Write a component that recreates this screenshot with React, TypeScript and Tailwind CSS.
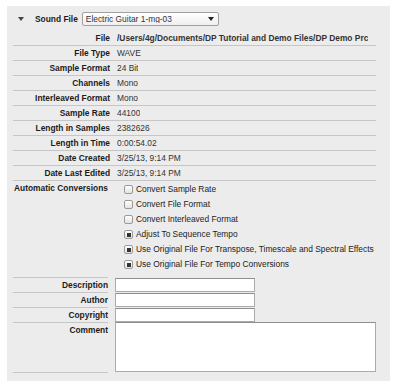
const font = { fontFamily: '"Liberation Sans", Arial, sans-serif' };

const infoRows: { label: string; value: string; bold?: boolean }[] = [
  { label: "File", value: "/Users/4g/Documents/DP Tutorial and Demo Files/DP Demo Prc", bold: true },
  { label: "File Type", value: "WAVE" },
  { label: "Sample Format", value: "24 Bit" },
  { label: "Channels", value: "Mono" },
  { label: "Interleaved Format", value: "Mono" },
  { label: "Sample Rate", value: "44100" },
  { label: "Length in Samples", value: "2382626" },
  { label: "Length in Time", value: "0:00:54.02" },
  { label: "Date Created", value: "3/25/13, 9:14 PM" },
  { label: "Date Last Edited", value: "3/25/13, 9:14 PM" },
];

const conversions = [
  { label: "Convert Sample Rate", checked: false },
  { label: "Convert File Format", checked: false },
  { label: "Convert Interleaved Format", checked: false },
  { label: "Adjust To Sequence Tempo", checked: true },
  { label: "Use Original File For Transpose, Timescale and Spectral Effects", checked: true },
  { label: "Use Original File For Tempo Conversions", checked: true },
];

function Checkbox({ checked }: { checked: boolean }) {
  return (
    <span className="flex h-[9px] w-[9px] shrink-0 items-center justify-center rounded-[2px] border border-[#9a9a9a] bg-gradient-to-b from-white to-[#e2e2e2]">
      {checked && <span className="h-[4px] w-[4px] bg-[#333]" />}
    </span>
  );
}

export default function App() {
  return (
    <div className="h-[388px] w-[397px] bg-white pl-[7px] pt-[6px] whitespace-nowrap text-[8.4px] leading-none" style={font}>
      <div className="h-[375px] w-[383px] bg-[#ececec] pl-[6px]">
        {/* header */}
        <div className="flex h-[25px] items-center pt-[1px]">
          <span className="ml-[5px] h-0 w-0 border-x-[3px] border-t-[4px] border-x-transparent border-t-[#444]" />
          <span className="ml-[11px] font-bold text-[#1c1c1c]">Sound File</span>
          <div className="ml-[4px] flex h-[14px] w-[137px] items-center rounded-[2px] border border-[#a0a0a0] bg-gradient-to-b from-white to-[#efefef] pl-[3px] text-[#333]">
            <span className="flex-1 overflow-hidden">Electric Guitar 1-mg-03</span>
            <span className="mr-[4px] h-0 w-0 shrink-0 border-x-[3px] border-t-[4px] border-x-transparent border-t-[#222]" />
          </div>
        </div>

        {/* info rows */}
        <div className="w-[363px]">
          {infoRows.map((r) => (
            <div key={r.label} className="flex h-[15px] items-center border-b border-[#c6c6c6] pt-[1px]">
              <span className="w-[97px] shrink-0 text-right font-bold text-[#1c1c1c]">{r.label}</span>
              <span className={`ml-[7px] overflow-hidden text-[#333] ${r.bold ? "font-bold" : ""}`}>
                {r.value}
              </span>
            </div>
          ))}
        </div>

        {/* conversions */}
        <div className="flex pt-[1px]">
          <span className="flex h-[13px] w-[95px] shrink-0 items-center justify-end font-bold text-[#1c1c1c]">
            Automatic Conversions
          </span>
          <div className="ml-[16px] flex flex-col">
            {conversions.map((c) => (
              <div key={c.label} className="flex h-[15px] items-center gap-[3px] text-[#222]">
                <Checkbox checked={c.checked} />
                <span>{c.label}</span>
              </div>
            ))}
          </div>
        </div>

        {/* metadata */}
        <div className="mt-[5px]">
          {["Description", "Author", "Copyright"].map((l) => (
            <div key={l} className="flex h-[15px] items-center">
              <span className="flex h-full w-[95px] shrink-0 items-center justify-end border-t border-[#c6c6c6] font-bold text-[#1c1c1c]">
                {l}
              </span>
              <div className="ml-[7px] h-[14px] w-[140px] border border-[#ababab] border-t-[#8e8e8e] bg-white" />
            </div>
          ))}
          <div className="flex h-[51px]">
            <span className="h-full w-[95px] shrink-0 border-y border-[#c6c6c6] pt-[3px] text-right font-bold text-[#1c1c1c]">
              Comment
            </span>
            <div className="ml-[7px] h-[50px] w-[261px] border border-[#ababab] border-t-[#8e8e8e] bg-white" />
          </div>
        </div>
      </div>
    </div>
  );
}
